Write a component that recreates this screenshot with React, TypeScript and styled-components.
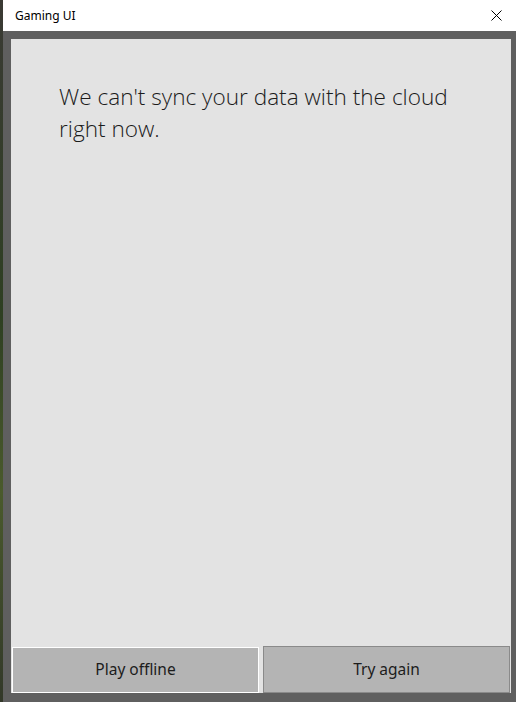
import React from 'react';
import styled, { createGlobalStyle } from 'styled-components';

const GlobalStyle = createGlobalStyle`
  html, body {
    margin: 0;
    padding: 0;
    background: #2f3a24;
  }
  #root {
    width: 516px;
    height: 702px;
  }
`;

const Desktop = styled.div`
  display: flex;
  width: 516px;
  height: 702px;
  padding-left: 3px;
  box-sizing: border-box;
  background: linear-gradient(180deg, #3a3a34 0%, #2e3f22 45%, #4a5a2c 70%, #323829 100%);
`;

const Window = styled.div`
  flex: 1;
  display: flex;
  flex-direction: column;
  background: #5f5f5f;
`;

const TitleBar = styled.div`
  height: 31px;
  flex: none;
  display: flex;
  align-items: center;
  justify-content: space-between;
  background: #ffffff;
  padding: 0 14px 0 12px;
  font-family: "Noto Sans", "Open Sans", sans-serif;
  font-size: 12px;
  color: #000;
`;

const Title = styled.span`
  padding-bottom: 1px;
`;

const CloseButton = styled.button`
  border: none;
  background: transparent;
  padding: 0;
  width: 12px;
  height: 12px;
  display: flex;
  align-items: center;
  justify-content: center;
`;

const Frame = styled.div`
  flex: 1;
  display: flex;
  padding: 8px 5px 9px 8px;
  min-height: 0;
`;

const Panel = styled.div`
  flex: 1;
  display: flex;
  flex-direction: column;
  background: #e3e3e3;
`;

const Message = styled.p`
  flex: 1;
  margin: 0;
  padding: 42px 40px 0 48px;
  font-family: "Open Sans", "Noto Sans", sans-serif;
  font-weight: 300;
  font-size: 22.6px;
  line-height: 32px;
  color: #1b1b1b;
`;

const ButtonRow = styled.div`
  display: grid;
  grid-template-columns: 1fr 1fr;
  gap: 4px;
  padding: 0 1px;
  background: #e3e3e3;
`;

const DialogButton = styled.button<{ $focused?: boolean }>`
  height: ${p => (p.$focused ? '46px' : '47px')};
  margin: ${p => (p.$focused ? '1px 0 0' : '0')};
  background: #b4b4b4;
  border: 1px solid ${p => (p.$focused ? '#ffffff' : '#8a8a8a')};
  font-family: "Noto Sans", "Open Sans", sans-serif;
  font-size: 15.5px;
  color: #1c1c1c;
  padding: 0 0 2px;
`;

function App() {
  return (
    <>
      <GlobalStyle />
      <Desktop>
        <Window>
          <TitleBar>
            <Title>Gaming UI</Title>
            <CloseButton aria-label="Close">
              <svg width="11" height="11" viewBox="0 0 11 11">
                <path d="M0.5 0.5 L10.5 10.5 M10.5 0.5 L0.5 10.5" stroke="#000" strokeWidth="1" />
              </svg>
            </CloseButton>
          </TitleBar>
          <Frame>
            <Panel>
              <Message>We can't sync your data with the cloud right now.</Message>
              <ButtonRow>
                <DialogButton $focused>Play offline</DialogButton>
                <DialogButton>Try again</DialogButton>
              </ButtonRow>
            </Panel>
          </Frame>
        </Window>
      </Desktop>
    </>
  );
}

export default App;
